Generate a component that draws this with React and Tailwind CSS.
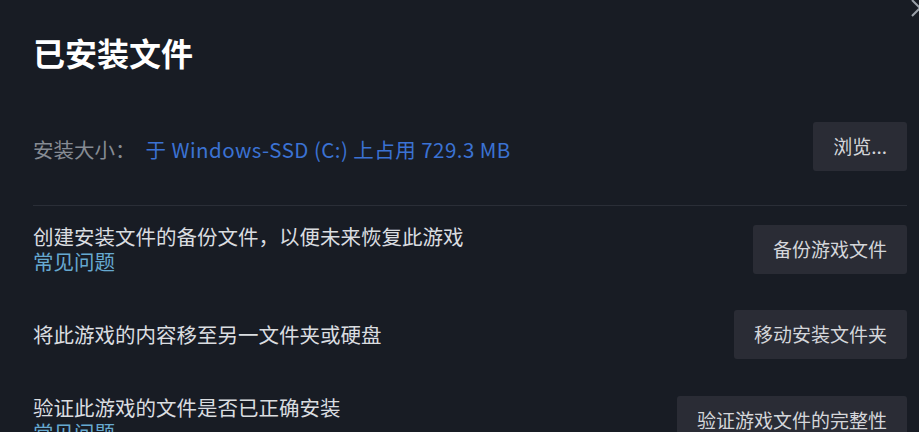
const rows = [
    { text: '创建安装文件的备份文件，以便未来恢复此游戏', faq: true, button: '备份游戏文件' },
    { text: '将此游戏的内容移至另一文件夹或硬盘', faq: false, button: '移动安装文件夹' },
    { text: '验证此游戏的文件是否已正确安装', faq: true, button: '验证游戏文件的完整性' },
];

const ActionButton = ({ children }) => (
    <button className="h-[49px] shrink-0 rounded-[3px] bg-[#2a2c35] px-5 text-[19px] text-[#d4d6da]">
        {children}
    </button>
);

const App = () => {
    return (
        <div className="relative h-[432px] w-[919px] overflow-hidden bg-[#181c24] pl-[33px] pr-[12px] pt-[28px] font-['Noto_Sans_CJK_SC','Noto_Sans',sans-serif]">
            {/* close icon, mostly off screen */}
            <svg className="absolute -right-[11px] -top-[2px] h-[20px] w-[20px]" viewBox="0 0 20 20" fill="none">
                <path d="M2 2L18 18M18 2L2 18" stroke="#9aa0a8" strokeWidth="2" />
            </svg>

            <h1 className="text-[32px] font-bold leading-[48px] text-white">已安装文件</h1>

            <div className="mt-[46px] flex items-center justify-between">
                <div className="flex items-center pt-[5px] text-[20.5px] leading-[25px]">
                    <span className="text-[#868b93]">安装大小：</span>
                    <span className="ml-[10px] tracking-[0.45px] text-[#3b72d3]">于 Windows-SSD (C:) 上占用 729.3 MB</span>
                </div>
                <ActionButton>浏览...</ActionButton>
            </div>

            <div className="mt-[34px] h-px bg-[#2a2e37]" />

            <div className="mt-[18px] flex flex-col gap-[36px]">
                {rows.map((row, i) => (
                    <div key={i} className="flex items-center justify-between">
                        <div className="text-[20.5px] leading-[25px]">
                            <p className="text-[#dadde0]">{row.text}</p>
                            {row.faq && <p className="text-[#66a9d0]">常见问题</p>}
                        </div>
                        <ActionButton>{row.button}</ActionButton>
                    </div>
                ))}
            </div>
        </div>
    );
};

export default App;
